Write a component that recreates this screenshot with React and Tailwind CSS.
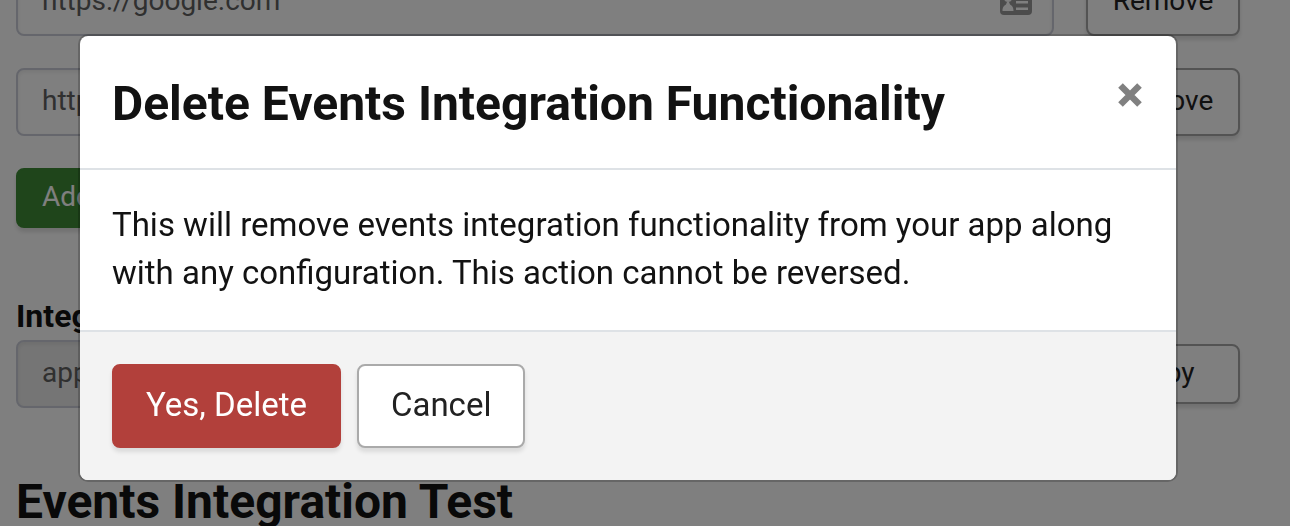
import { useState } from "react";

const fieldClass =
  "min-w-0 w-full h-17 rounded-lg border-2 border-[#cacdd8] px-6 pb-1 text-[28px] leading-8 text-[#606060] shadow-[inset_0_2px_4px_rgba(0,0,0,0.08)]";

const outlineButtonClass =
  "w-[154px] shrink-0 rounded-lg border-2 border-[#a6a6a6] bg-white pb-0.5 text-[28px] leading-8 text-[#222] shadow-[0_4px_4px_rgba(0,0,0,0.12)]";

const dialogButtonClass =
  "h-21 rounded-lg border-2 px-8 pb-0.5 shadow-[0_4px_4px_rgba(0,0,0,0.1)]";

function ContactIcon() {
  return (
    <svg className="block h-7 w-8" viewBox="0 0 32 28" aria-hidden="true">
      <rect width="32" height="27" rx="4" fill="#999" />
      <circle cx="8" cy="10" r="4" fill="#fff" />
      <path d="M2.500 23c0-4 1.500-5.500 3.500-6.500l1-2.500h2l1 2.500c2 1 3.500 2.500 3.500 6.500z" fill="#fff" />
      <path d="M16 6h12v2.500H16zM16 13h12v2.500H16zM16 19.500h12v2.500H16z" fill="#fff" />
    </svg>
  );
}

function UrlRow({ id, value, contact }) {
  return (
    <div className="flex gap-8">
      <div className="relative flex-1">
        <input id={id} aria-label="Redirect URL" defaultValue={value} className={`${fieldClass} bg-white`} />
        {contact && (
          <span className="absolute inset-y-0 right-[22px] flex items-center">
            <ContactIcon />
          </span>
        )}
      </div>
      <button type="button" className={outlineButtonClass}>Remove</button>
    </div>
  );
}

function DeleteDialog({ onClose }) {
  return (
    <div className="fixed inset-0 flex items-start bg-black/50 pt-9 pr-[114px] pl-20">
      <section
        role="dialog"
        aria-modal="true"
        aria-labelledby="dialog-title"
        className="flex-1 overflow-hidden rounded-lg bg-white text-[#121212] shadow-[0_0_0_2px_rgba(0,0,0,0.2)]"
      >
        <header className="flex items-start justify-between border-b-2 border-[#dee2e6] px-8 pt-[38px] pb-[34px]">
          <h2 id="dialog-title" className="text-[48px] leading-[60px] font-bold">
            Delete Events Integration Functionality
          </h2>
          <button type="button" aria-label="Close" onClick={onClose} className="flex h-[42px] w-7 items-center justify-center">
            <svg className="h-6 w-6" viewBox="0 0 24 24" aria-hidden="true">
              <path d="M2.500 2.500l19 19M21.500 2.500l-19 19" stroke="#808080" strokeWidth="6.500" />
            </svg>
          </button>
        </header>
        <p className="pt-[31px] pr-8 pb-[33px] pl-8 text-[33px] leading-12">
          This will remove events integration functionality from your app along with any configuration. This action
          cannot be reversed.
        </p>
        <footer className="flex gap-4 border-t-2 border-[#dee2e6] bg-[#f3f3f3] p-8 text-[33px] leading-12">
          <button type="button" className={`${dialogButtonClass} border-[#b2403b] bg-[#b2403b] text-white`}>
            Yes, Delete
          </button>
          <button type="button" onClick={onClose} className={`${dialogButtonClass} border-[#aaa] bg-white text-[#222]`}>
            Cancel
          </button>
        </footer>
      </section>
    </div>
  );
}

export default function App() {
  const [open, setOpen] = useState(true);
  return (
    <div className="h-screen overflow-hidden bg-white font-['Roboto',sans-serif] text-[#121212]">
      <main className="-mt-8 flex flex-col pr-[50px] pl-4">
        <div className="flex flex-col items-stretch gap-8">
          <UrlRow id="url-1" value="https://google.com" contact />
          <UrlRow id="url-2" value="https://example.com" />
          <button
            type="button"
            className="h-15 self-start rounded-lg border-2 border-[#3e8a36] bg-[#3e8a36] px-6 pb-0.5 text-[28px] leading-8 text-white shadow-[0_4px_4px_rgba(0,0,0,0.12)]"
          >
            Add URL
          </button>
        </div>
        <label htmlFor="key" className="mt-17 pb-1 text-[32px] leading-10 font-bold">
          Integration Key
        </label>
        <div className="flex items-center gap-8">
          <input id="key" readOnly defaultValue="app-integration-key" className={`${fieldClass} bg-[#ebebeb]`} />
          <button type="button" className={`${outlineButtonClass} h-15`}>Copy</button>
        </div>
        <h2 className="mt-16 text-[48px] leading-[60px] font-bold">Events Integration Test</h2>
      </main>
      {open && <DeleteDialog onClose={() => setOpen(false)} />}
    </div>
  );
}
